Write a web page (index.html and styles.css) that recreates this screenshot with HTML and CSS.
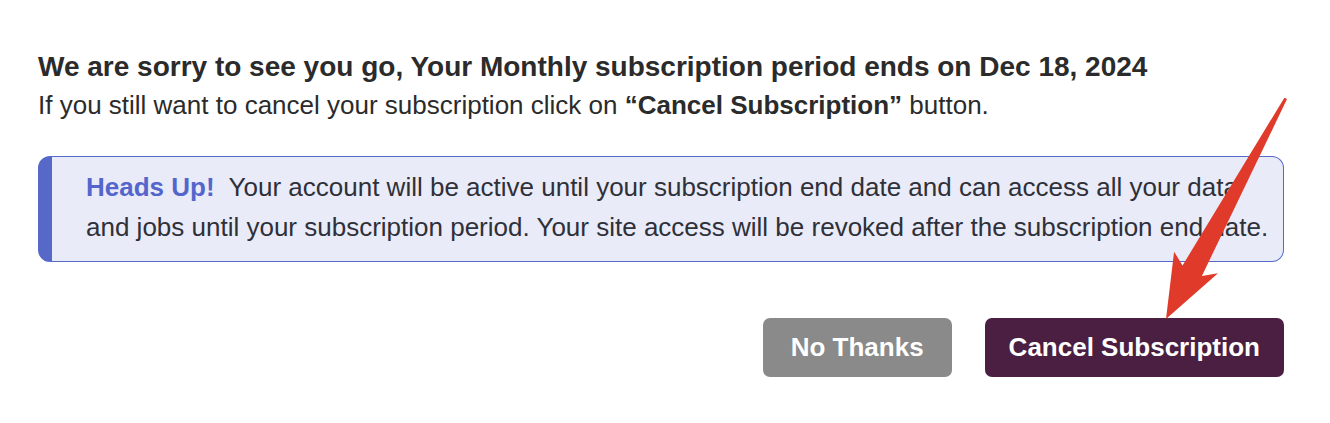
FILE: index.html
```html
<!DOCTYPE html>
<html lang="en">
<head>
    <meta charset="UTF-8">
    <meta name="viewport" content="width=device-width, initial-scale=1.0">
    <title>Cancel Subscription</title>
    <link rel="stylesheet" href="styles.css">
</head>
<body>
    <div class="modal">
        <h3 class="titulo">We are sorry to see you go, Your Monthly subscription period ends on Dec 18, 2024</h3>
        <p class="subtitulo">If you still want to cancel your subscription click on <strong>“Cancel Subscription”</strong> button.</p>

        <div class="aviso">
            <strong class="aviso-titulo">Heads Up!</strong>&nbsp; Your account will be active until your subscription end date and can access all your data and jobs until your subscription period. Your site access will be revoked after the subscription end date.
        </div>

        <div class="acciones">
            <button class="btn btn-gris">No Thanks</button>
            <button class="btn btn-cancelar">Cancel Subscription</button>
        </div>

        <svg class="flecha" width="1330" height="423" viewBox="0 0 1330 423">
            <polygon fill="#e03a2a" points="1284.4,97.7 1287,99.1 1201.9,275.9 1218,273.3 1166,319 1174.1,251.7 1182.5,265.5"/>
        </svg>
    </div>
</body>
</html>
```

FILE: styles.css
```css
body {
    margin: 0;
    padding: 0;
    background: white;
    font-family: "Liberation Sans", Arial, sans-serif;
    color: #2b2b2b;
}
.modal {
    position: relative;
    padding: 48px 46px 0 38px;
    height: 423px;
    box-sizing: border-box;
}
.titulo {
    margin: 0;
    font-size: 28px;
    font-weight: bold;
    line-height: 38px;
    color: #2b2b2b;
}
.subtitulo {
    margin: 0;
    font-size: 26px;
    line-height: 38px;
}
.subtitulo strong {
    font-weight: bold;
}
.aviso {
    margin-top: 32px;
    padding: 10px 4px 14px 34px;
    background: #e9ebf8;
    border: 1.5px solid #5669c9;
    border-left: 14px solid #5669c9;
    border-radius: 12px;
    font-size: 26px;
    line-height: 40px;
    color: #2f3038;
}
.aviso-titulo {
    color: #5466cc;
}
.acciones {
    display: flex;
    justify-content: flex-end;
    gap: 33px;
    margin-top: 56px;
}
.btn {
    border: none;
    border-radius: 7px;
    height: 59px;
    padding: 0 24px;
    font-family: "Liberation Sans", Arial, sans-serif;
    font-size: 26px;
    font-weight: bold;
    color: white;
    cursor: pointer;
}
.btn-gris {
    padding: 0 28px;
    background: #8a8a8a;
}
.btn-cancelar {
    background: #4a1f42;
}
.flecha {
    position: absolute;
    left: 0;
    top: 0;
    pointer-events: none;
}
```
